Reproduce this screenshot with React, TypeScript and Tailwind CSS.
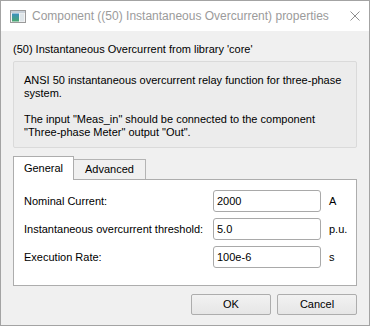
import React from "react";

const F = { fontFamily: '"Liberation Sans", Arial, sans-serif' };

function AppIcon() {
  return (
    <svg width="16" height="13" viewBox="0 0 16 13">
      <rect x="0.5" y="0.5" width="15" height="12" fill="#f4f4f4" stroke="#9a9a9a" />
      <rect x="1" y="1" width="14" height="2" fill="#c8d0d8" />
      <defs>
        <linearGradient id="g" x1="0" y1="0" x2="0" y2="1">
          <stop offset="0" stopColor="#3c8fc0" />
          <stop offset="1" stopColor="#4aa870" />
        </linearGradient>
      </defs>
      <rect x="2" y="3.5" width="7" height="8" fill="url(#g)" />
      <rect x="10" y="3.5" width="4" height="8" fill="#dfe6ea" />
    </svg>
  );
}

function Row({ label, value, unit }: { label: string; value: string; unit: string }) {
  return (
    <div className="flex items-center h-[22px]">
      <div className="w-[199px] pl-[10px] text-[11px] text-[#000]">{label}</div>
      <div className="w-[108px] h-[22px] border border-[#a9a9a9] rounded-[3px] bg-white flex items-center pl-[3px] text-[11px] text-black">
        {value}
      </div>
      <div className="pl-[8px] text-[11px] text-black">{unit}</div>
    </div>
  );
}

export default function App() {
  return (
    <div
      className="w-[370px] h-[326px] border border-[#a3a3a3] bg-[#f0f0f0] flex flex-col overflow-hidden"
      style={F}
    >
      <div className="h-[30px] bg-white flex items-center shrink-0">
        <div className="ml-[9px] mt-[1px] flex items-center">
          <AppIcon />
        </div>
        <div className="ml-[6px] text-[12px] text-[#9b9b9b] whitespace-nowrap">
          Component ((50) Instantaneous Overcurrent) properties
        </div>
        <div className="ml-auto mr-[9px] flex items-center">
          <svg width="10" height="10" viewBox="0 0 10 10">
            <path d="M0.5 0.5 L9.5 9.5 M9.5 0.5 L0.5 9.5" stroke="#8f8f8f" strokeWidth="1" />
          </svg>
        </div>
      </div>
      <div className="flex flex-col px-[12px] pt-[12px]">
        <div className="text-[11px] leading-[13px] text-black">
          (50) Instantaneous Overcurrent from library 'core'
        </div>
        <div className="mt-[5px] h-[87px] border border-[#dadada] rounded-[2px] bg-[#ececec] pl-[10px] pr-[10px] pt-[12px] text-[11px] leading-[13px] text-black">
          <p>ANSI 50 instantaneous overcurrent relay function for three-phase system.</p>
          <p className="mt-[13px]">
            The input "Meas_in" should be connected to the component "Three-phase Meter" output "Out".
          </p>
        </div>
        <div className="mt-[8px] flex items-end h-[23px] relative z-10">
          <div className="w-[61px] h-[24px] -mb-[1px] bg-white border border-[#adadad] border-b-0 flex items-center justify-center text-[11px] text-black">
            General
          </div>
          <div className="w-[72px] h-[20px] bg-[#f0f0f0] border border-[#b4b4b4] border-l-0 border-b-0 flex items-center justify-center text-[11px] text-black">
            Advanced
          </div>
        </div>
        <div className="h-[107px] bg-white border border-[#adadad] flex flex-col pt-[10px] gap-[6px]">
          <Row label="Nominal Current:" value="2000" unit="A" />
          <Row label="Instantaneous overcurrent threshold:" value="5.0" unit="p.u." />
          <Row label="Execution Rate:" value="100e-6" unit="s" />
        </div>
        <div className="mt-[8px] flex justify-end gap-[6px] pr-[0px]">
          <div className="w-[80px] h-[21px] border border-[#adadad] rounded-[2px] bg-gradient-to-b from-[#f2f2f2] to-[#e6e6e6] flex items-center justify-center text-[11px] text-black">
            OK
          </div>
          <div className="w-[80px] h-[21px] border border-[#adadad] rounded-[2px] bg-gradient-to-b from-[#f2f2f2] to-[#e6e6e6] flex items-center justify-center text-[11px] text-black">
            Cancel
          </div>
        </div>
      </div>
    </div>
  );
}
